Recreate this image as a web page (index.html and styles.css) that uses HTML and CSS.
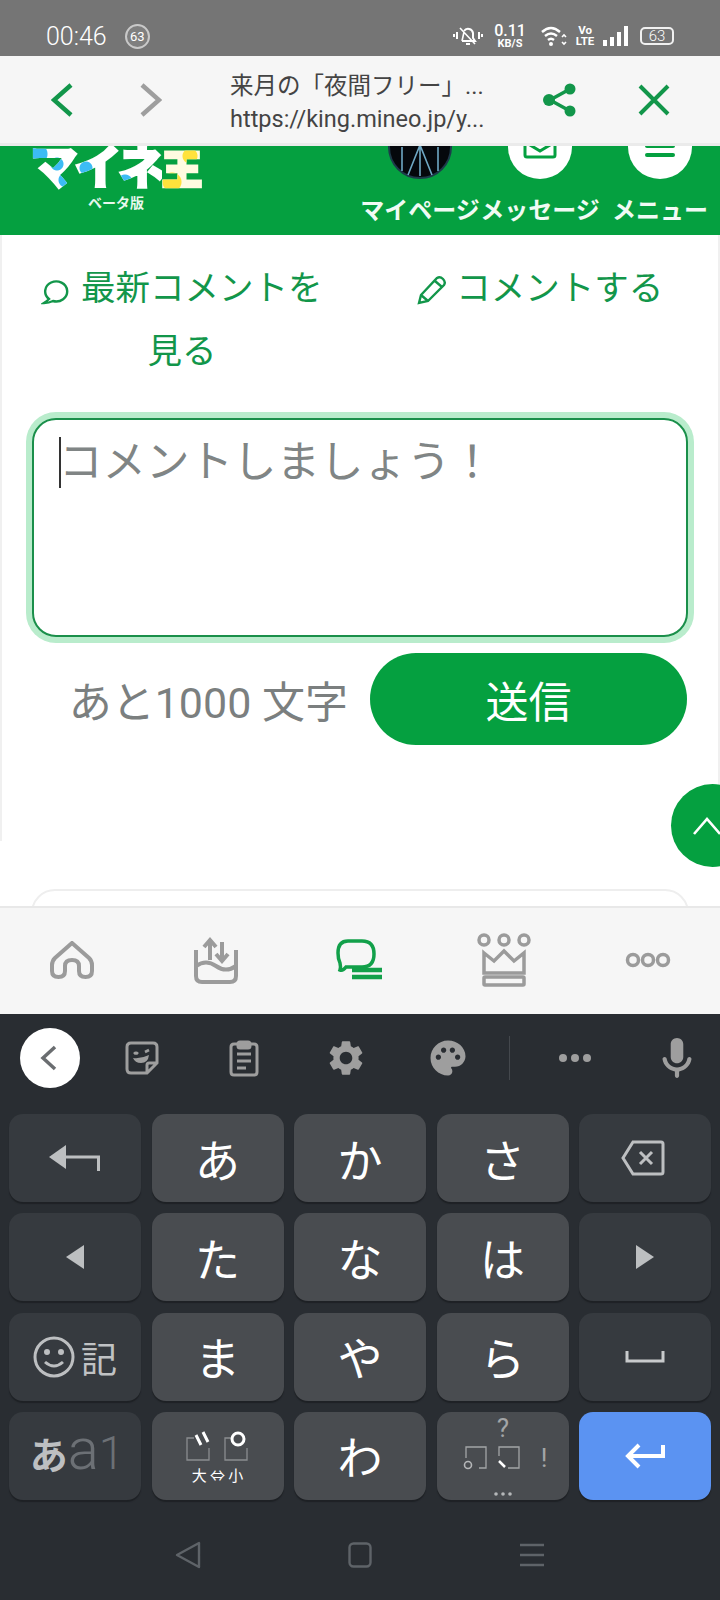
FILE: index.html
```html
<!DOCTYPE html>
<html lang="ja">
<head>
    <meta charset="UTF-8">
    <meta name="viewport" content="width=device-width, initial-scale=1.0">
    <title>マイネ王</title>
    <link rel="stylesheet" href="styles.css">
</head>
<body>
    <div class="status-bar">
        <div class="status-left">
            <span class="clock">00:46</span>
            <span class="badge">63</span>
        </div>
        <div class="status-right">
            <svg class="ic-bell" width="30" height="24" viewBox="0 0 30 24" fill="none" stroke="#fff" stroke-width="2">
                <path d="M9 17h13l-2-3V9a5 5 0 0 0-9 -2"/><path d="M11 8l-2 9M7 4l15 16" stroke-width="1.6"/><path d="M13 20h4"/>
                <path d="M1 10v3M4 8v7M26 8v7M29 10v3"/>
            </svg>
            <div class="speed"><span class="speed-num">0.11</span><span class="speed-unit">KB/S</span></div>
            <svg class="ic-wifi" width="26" height="22" viewBox="0 0 26 22" fill="none" stroke="#fff" stroke-width="2.4">
                <path d="M1 7q9-8 18 0M4 11q6-5 12 0M7 15q3-2.500 6 0"/>
                <circle cx="10" cy="19" r="2" fill="#fff" stroke="none"/>
                <path d="M21 12l2-2 2 2M21 17l2 2 2-2" stroke-width="1.6"/>
            </svg>
            <div class="volte"><span>Vo</span><span>LTE</span></div>
            <svg class="ic-signal" width="26" height="20" viewBox="0 0 26 20" fill="#fff">
                <rect x="0" y="14" width="4" height="6"/><rect x="7" y="11" width="4" height="9"/><rect x="14" y="6" width="4" height="14"/><rect x="21" y="0" width="4" height="20"/>
            </svg>
            <div class="battery"><span>63</span></div>
        </div>
    </div>

    <div class="browser-bar">
        <svg class="nav-arrow" width="22" height="34" viewBox="0 0 22 34" fill="none" stroke="#12964a" stroke-width="4.500"><path d="M20 2L3 17l17 15"/></svg>
        <svg class="nav-arrow nav-forward" width="22" height="34" viewBox="0 0 22 34" fill="none" stroke="#9e9e9e" stroke-width="4.500"><path d="M2 2l17 15L2 32"/></svg>
        <div class="browser-title">
            <div class="page-title">来月の「夜間フリー」<span class="ellipsis">...</span></div>
            <div class="page-url">https://king.mineo.jp/y...</div>
        </div>
        <svg class="share" width="36" height="36" viewBox="0 0 36 36" fill="#12964a" stroke="#12964a">
            <path d="M28 7L8 18l20 11" fill="none" stroke-width="3.500"/>
            <circle cx="28" cy="7" r="5.500" stroke="none"/><circle cx="7" cy="18" r="6" stroke="none"/><circle cx="28" cy="29" r="5.500" stroke="none"/>
        </svg>
        <svg class="close" width="32" height="32" viewBox="0 0 32 32" fill="none" stroke="#12964a" stroke-width="4"><path d="M2 2l28 28M30 2L2 30"/></svg>
    </div>

    <main class="page">
        <header class="site-header">
            <div class="logo">
                <div class="logo-mark"><span class="logo-kana">マイネ</span><span class="logo-king">王</span></div>
                <div class="logo-beta">ベータ版</div>
            </div>
            <div class="header-menu">
                <div class="header-item">
                    <div class="avatar">
                        <svg width="64" height="64" viewBox="0 0 64 64" fill="none" stroke="#6fa8c4" stroke-width="1.600">
                            <circle cx="32" cy="32" r="31" fill="#05080c" stroke="#1d3a4a" stroke-width="2"/>
                            <path d="M32 30L20 60M32 30l12 30M32 30v31M14 32v24M50 32v24"/>
                        </svg>
                    </div>
                    <span>マイページ</span>
                </div>
                <div class="header-item">
                    <div class="avatar avatar-white">
                        <svg width="34" height="50" viewBox="0 0 34 50" fill="none" stroke="#05a040" stroke-width="3"><rect x="2" y="17" width="30" height="25" rx="2"/><path d="M2 27l15 9 15-9"/></svg>
                    </div>
                    <span>メッセージ</span>
                </div>
                <div class="header-item">
                    <div class="avatar avatar-white">
                        <svg width="30" height="50" viewBox="0 0 30 50" fill="#05a040"><rect y="20" width="30" height="4" rx="2"/><rect y="29" width="30" height="4" rx="2"/><rect y="38" width="30" height="4" rx="2"/></svg>
                    </div>
                    <span>メニュー</span>
                </div>
            </div>
        </header>

        <section class="comment-form">
            <div class="comment-links">
                <a class="comment-link comment-link-latest">
                    <svg width="30" height="30" viewBox="0 0 30 30" fill="none" stroke="#12964a" stroke-width="2.400"><path d="M8 24a11 10 0 1 1 4 2q-4 2-9 2 3-2 5-4z"/></svg>
                    最新コメントを見る
                </a>
                <a class="comment-link">
                    <svg width="30" height="30" viewBox="0 0 30 30" fill="none" stroke="#12964a" stroke-width="2.400"><path d="M2 28l2-8L20 3q3-2 6 1t1 6L11 26zM4 20l7 6M18 6l7 6"/></svg>
                    コメントする
                </a>
            </div>
            <div class="comment-box">
                <span class="caret"></span><span class="placeholder">コメントしましょう！</span>
            </div>
            <div class="form-footer">
                <span class="char-count">あと1000 文字</span>
                <button class="send-btn">送信</button>
            </div>
        </section>

        <div class="next-card"></div>

        <div class="to-top">
            <svg width="30" height="20" viewBox="0 0 30 20" fill="none" stroke="#fff" stroke-width="2.600"><path d="M2 18L15 3l13 15"/></svg>
        </div>
    </main>

    <nav class="bottom-nav">
        <svg width="46" height="38" viewBox="0 0 46 38" fill="none" stroke="#9b9b9b" stroke-width="4"><path d="M23 2l17 15q3 3 3 7v6q0 6-6.500 6T30 30v-5q0-6-7-6t-7 6v5q0 6-6.500 6T3 30v-6q0-4 3-7z"/></svg>
        <svg width="46" height="48" viewBox="0 0 46 48" fill="none" stroke="#9b9b9b" stroke-width="4"><path d="M3 14v26q0 6 6 6h28q6 0 6-6V14M3 30q10-7 20 0t20 0M17 24V5M11 11l6-7 6 7M29 6v18M23 18l6 7 6-7"/></svg>
        <svg width="48" height="42" viewBox="0 0 48 42" fill="none" stroke="#12a04a"><path d="M12 2h14q12 0 12 13t-12 13H10q-3 4-6 3 1-3 0-7-2-4-2-10Q2 2 12 2z" stroke-width="3.500"/><path d="M16 31h30M16 38h30" stroke-width="4.500"/></svg>
        <svg width="54" height="54" viewBox="0 0 54 54" fill="none" stroke="#9b9b9b" stroke-width="3.500"><circle cx="7" cy="7" r="5"/><circle cx="27" cy="7" r="5"/><circle cx="47" cy="7" r="5"/><path d="M7 20l10 8 10-10 10 10 10-8v20H7z"/><rect x="7" y="44" width="40" height="8" rx="1"/></svg>
        <svg width="46" height="16" viewBox="0 0 46 16" fill="none" stroke="#9b9b9b" stroke-width="3.500"><circle cx="8" cy="8" r="5.500"/><circle cx="23" cy="8" r="5.500"/><circle cx="38" cy="8" r="5.500"/></svg>
    </nav>

    <div class="keyboard">
        <div class="kb-tools">
            <div class="tool-back">
                <svg width="18" height="26" viewBox="0 0 18 26" fill="none" stroke="#6a6d70" stroke-width="3.500"><path d="M15 2L3 13l12 11"/></svg>
            </div>
            <div class="tool tool-first">
                <svg width="34" height="34" viewBox="0 0 34 34" fill="none" stroke="#9e9e9e" stroke-width="3"><path d="M6 2h22q4 0 4 4v16L22 32H6q-4 0-4-4V6q0-4 4-4zM32 22H24q-2 0-2 2v8"/><path d="M9 13q2-2 4 0M20 11l4-2" stroke-width="2.600"/><path d="M8 17q8 1 16-3-1 8-8 8-6 0-8-5z" fill="#9e9e9e" stroke="none"/></svg>
            </div>
            <div class="tool">
                <svg width="30" height="38" viewBox="0 0 30 38" fill="none" stroke="#9e9e9e" stroke-width="3"><path d="M9 5H5q-3 0-3 3v25q0 3 3 3h20q3 0 3-3V8q0-3-3-3h-4"/><rect x="9" y="3" width="12" height="6" rx="2" fill="#9e9e9e"/><path d="M8 15h14M8 22h14M8 29h9"/></svg>
            </div>
            <div class="tool">
                <svg width="42" height="42" viewBox="0 0 24 24" fill="#9e9e9e"><path d="M19.14 12.94c.04-.3.06-.61.06-.94 0-.32-.02-.64-.07-.94l2.03-1.58c.18-.14.23-.41.12-.61l-1.92-3.32c-.12-.22-.37-.29-.59-.22l-2.39.96c-.5-.38-1.03-.7-1.62-.94l-.36-2.54c-.04-.24-.24-.41-.48-.41h-3.84c-.24 0-.43.17-.47.41l-.36 2.54c-.59.24-1.13.57-1.62.94l-2.39-.96c-.22-.08-.47 0-.59.22L2.74 8.87c-.12.21-.08.47.12.61l2.03 1.58c-.05.3-.09.63-.09.94s.02.64.07.94l-2.03 1.58c-.18.14-.23.41-.12.61l1.92 3.32c.12.22.37.29.59.22l2.39-.96c.5.38 1.03.7 1.62.94l.36 2.54c.05.24.24.41.48.41h3.84c.24 0 .44-.17.47-.41l.36-2.54c.59-.24 1.13-.56 1.62-.94l2.39.96c.22.08.47 0 .59-.22l1.92-3.32c.12-.22.07-.47-.12-.61l-2.01-1.58zM12 15.6c-1.98 0-3.6-1.62-3.6-3.6s1.62-3.6 3.6-3.6 3.6 1.62 3.6 3.6-1.62 3.6-3.6 3.6z"/></svg>
            </div>
            <div class="tool">
                <svg width="42" height="42" viewBox="0 0 24 24" fill="#9e9e9e"><path d="M12 2C6.490 2 2 6.490 2 12s4.490 10 10 10c1.380 0 2.500-1.120 2.500-2.500 0-.61-.23-1.200-.64-1.670-.08-.1-.13-.21-.13-.33 0-.28.22-.5.5-.5H16c3.310 0 6-2.690 6-6 0-4.960-4.490-9-10-9zm5.500 11c-.83 0-1.500-.67-1.500-1.500s.67-1.500 1.500-1.500 1.500.67 1.500 1.500-.67 1.500-1.500 1.500zm-3-4c-.83 0-1.500-.67-1.500-1.500S13.670 6 14.500 6s1.500.67 1.500 1.500S15.330 9 14.500 9zM5 11.500c0-.83.67-1.500 1.500-1.500s1.500.67 1.500 1.500S7.330 13 6.500 13 5 12.330 5 11.500zm6-4c0 .83-.67 1.500-1.500 1.500S8 8.330 8 7.500 8.670 6 9.500 6s1.500.67 1.500 1.500z"/></svg>
            </div>
            <div class="tool-divider"></div>
            <div class="tool tool-dots">
                <svg width="34" height="10" viewBox="0 0 34 10" fill="#9e9e9e"><circle cx="5" cy="5" r="4"/><circle cx="17" cy="5" r="4"/><circle cx="29" cy="5" r="4"/></svg>
            </div>
            <div class="tool tool-mic">
                <svg width="44" height="44" viewBox="3 1 18 21" fill="#9e9e9e"><path d="M12 14c1.660 0 3-1.340 3-3V5c0-1.660-1.340-3-3-3S9 3.340 9 5v6c0 1.660 1.340 3 3 3zm5.910-3c-.49 0-.9.36-.98.85C16.520 14.200 14.470 16 12 16s-4.520-1.800-4.930-4.150c-.08-.49-.49-.85-.98-.85-.61 0-1.090.54-1 1.140.49 3 2.890 5.350 5.910 5.780V20c0 .55.45 1 1 1s1-.45 1-1v-2.080c3.020-.43 5.420-2.780 5.910-5.780.1-.6-.39-1.140-1-1.140z"/></svg>
            </div>
        </div>

        <div class="kb-keys">
            <div class="key key-side">
                <svg width="52" height="26" viewBox="0 0 52 26" fill="#bdbfc1"><path d="M0 12L17 0v24z"/><path d="M14 10.500h37V26h-3v-12.500H14z"/></svg>
            </div>
            <div class="key">あ</div>
            <div class="key">か</div>
            <div class="key">さ</div>
            <div class="key key-side key-delete">
                <svg width="44" height="36" viewBox="0 0 44 36" fill="none" stroke="#bdbfc1" stroke-width="3"><path d="M12 2h28q2 0 2 2v28q0 2-2 2H12L2 18zM19 12l12 12M31 12L19 24"/></svg>
            </div>

            <div class="key key-side">
                <svg width="18" height="24" viewBox="0 0 18 24" fill="#bdbfc1"><path d="M0 12L18 0v24z"/></svg>
            </div>
            <div class="key">た</div>
            <div class="key">な</div>
            <div class="key">は</div>
            <div class="key key-side">
                <svg width="18" height="24" viewBox="0 0 18 24" fill="#bdbfc1"><path d="M18 12L0 0v24z"/></svg>
            </div>

            <div class="key key-side key-emoji">
                <svg width="42" height="42" viewBox="0 0 42 42" fill="none" stroke="#bdbfc1" stroke-width="3"><circle cx="21" cy="21" r="19"/><circle cx="14" cy="16" r="1.500" fill="#bdbfc1"/><circle cx="28" cy="16" r="1.500" fill="#bdbfc1"/><path d="M12 26q9 8 18 0"/></svg>
                <span>記</span>
            </div>
            <div class="key">ま</div>
            <div class="key">や</div>
            <div class="key">ら</div>
            <div class="key key-side">
                <svg width="40" height="12" viewBox="0 0 40 12" fill="none" stroke="#c8cacc" stroke-width="3"><path d="M2 0v10h36V0"/></svg>
            </div>

            <div class="key key-side key-mode"><span class="mode-kana">あ</span><span class="mode-a">a</span><span class="mode-one">1</span></div>
            <div class="key key-dakuten">
                <svg width="64" height="30" viewBox="0 0 64 30" fill="none">
                    <path d="M8 7H1v22h22v-12M45 7h-6v22h22V17" stroke="#8a8d90" stroke-width="1.300"/>
                    <path d="M10 4l5 10M17 1l5 10" stroke="#fff" stroke-width="3"/>
                    <circle cx="52" cy="8" r="6" stroke="#fff" stroke-width="3"/>
                </svg>
                <span class="dakuten-label">大 ⇔ 小</span>
            </div>
            <div class="key">わ</div>
            <div class="key key-punct">
                <svg width="100" height="84" viewBox="0 0 100 84" fill="none">
                    <text class="punct-mark" x="50" y="23" text-anchor="middle">?</text>
                    <path d="M13 44V33h20v21h-7M46 42V33h20v21h-11" stroke="#a3a5a7" stroke-width="1.300"/>
                    <circle cx="15" cy="51" r="3.500" stroke="#b5b7b9" stroke-width="1.600"/>
                    <path d="M46 47l6 6" stroke="#fff" stroke-width="2.500"/>
                    <text class="punct-mark" x="91" y="53" text-anchor="middle">!</text>
                    <circle cx="43" cy="80" r="1.800" fill="#b5b7b9"/><circle cx="50" cy="80" r="1.800" fill="#b5b7b9"/><circle cx="57" cy="80" r="1.800" fill="#b5b7b9"/>
                </svg>
            </div>
            <div class="key key-enter">
                <svg width="40" height="26" viewBox="0 0 40 26" fill="none" stroke="#fff" stroke-width="4"><path d="M38 2v11H4M14 2L3 13l11 11"/></svg>
            </div>
        </div>

        <div class="sys-nav">
            <svg width="26" height="28" viewBox="0 0 26 28" fill="none" stroke="#5e6368" stroke-width="2.400"><path d="M24 2v24L2 14z" stroke-linejoin="round"/></svg>
            <svg width="24" height="26" viewBox="0 0 24 26" fill="none" stroke="#5e6368" stroke-width="2.400"><rect x="1.500" y="1.500" width="21" height="23" rx="4"/></svg>
            <svg width="24" height="24" viewBox="0 0 24 24" fill="none" stroke="#5e6368" stroke-width="2.400"><path d="M0 2h24M0 12h24M0 22h24"/></svg>
        </div>
    </div>
</body>
</html>
```

FILE: styles.css
```css
* {
    box-sizing: border-box;
}
body {
    font-family: "Noto Sans CJK JP", "Noto Sans", sans-serif;
    margin: 0;
    padding: 0;
    width: 720px;
    height: 1600px;
    overflow: hidden;
    display: flex;
    flex-direction: column;
    background-color: #fff;
}

/* Barra de estado */
.status-bar {
    height: 56px;
    flex: none;
    background-color: #757575;
    color: #fff;
    display: flex;
    align-items: center;
    justify-content: space-between;
    padding: 16px 46px 0 46px;
    font-family: Roboto, sans-serif;
}
.status-left {
    display: flex;
    align-items: center;
    gap: 18px;
}
.clock {
    font-size: 25px;
    font-weight: 300;
}
.badge {
    width: 25px;
    height: 25px;
    border-radius: 50%;
    border: 2px solid #c9c9c9;
    background-color: #7f7f7f;
    font-size: 13px;
    display: flex;
    align-items: center;
    justify-content: center;
}
.status-right {
    display: flex;
    align-items: center;
}
.ic-bell {
    margin-right: 11px;
}
.speed {
    display: flex;
    flex-direction: column;
    align-items: center;
    width: 32px;
    margin-right: 15px;
    font-weight: 500;
}
.speed-num {
    font-size: 16px;
    line-height: 14px;
}
.speed-unit {
    font-size: 11px;
    font-weight: 700;
    line-height: 11px;
}
.ic-wifi {
    margin-right: 10px;
}
.volte {
    display: flex;
    flex-direction: column;
    width: 16px;
    margin-right: 10px;
    font-size: 11.500px;
    font-weight: 700;
    line-height: 11px;
    align-items: center;
}
.ic-signal {
    margin-right: 11px;
}
.battery {
    width: 34px;
    height: 18px;
    border: 2px solid #f0f0f0;
    border-radius: 5px;
    font-size: 15px;
    font-weight: 300;
    display: flex;
    align-items: center;
    justify-content: center;
}

/* Barra del navegador */
.browser-bar {
    height: 90px;
    flex: none;
    background-color: #f6f6f6;
    border-bottom: 3px solid #ebebeb;
    display: flex;
    align-items: center;
}
.nav-arrow {
    margin-left: 51px;
}
.nav-forward {
    margin-left: 67px;
}
.browser-title {
    width: 262px;
    margin-left: 68px;
    color: #444;
    white-space: nowrap;
}
.page-title {
    font-size: 23.500px;
    line-height: 36px;
}
.ellipsis {
    font-family: Roboto, sans-serif;
}
.page-url {
    font-family: Roboto, sans-serif;
    font-size: 23.500px;
    line-height: 30px;
}
.share {
    margin-left: 50px;
}
.close {
    margin-left: 60px;
}

/* Cabecera del sitio */
.page {
    height: 760px;
    flex: none;
    position: relative;
    overflow: hidden;
    background-color: #fff;
}
.site-header {
    height: 89px;
    background-color: #05a040;
    display: flex;
    overflow: hidden;
}
.logo {
    width: 166px;
    margin-left: 33px;
    display: flex;
    flex-direction: column;
    align-items: center;
    margin-top: -8px;
}
.logo-mark {
    display: flex;
    font-size: 48px;
    font-weight: 900;
    line-height: 50px;
    white-space: nowrap;
}
.logo-kana {
    letter-spacing: -4px;
    -webkit-text-stroke: 2px transparent;
    background-image:
        radial-gradient(circle at 7px 16px, #3cbcf5 10px, transparent 11px),
        radial-gradient(circle at 27px 26px, #3cbcf5 6px, transparent 7px),
        radial-gradient(circle at 36px 42px, #3cbcf5 7px, transparent 8px),
        radial-gradient(circle at 56px 30px, #3cbcf5 6px, transparent 7px),
        radial-gradient(circle at 95px 44px, #3cbcf5 7px, transparent 8px),
        linear-gradient(#fff, #fff);
    -webkit-background-clip: text;
    background-clip: text;
    color: transparent;
}
.logo-king {
    font-size: 40px;
    margin-top: 4px;
    -webkit-text-stroke: 3px transparent;
    background-image:
        radial-gradient(circle at 10px 40px, #ffe23c 9px, transparent 10px),
        radial-gradient(circle at 28px 14px, #ffe23c 7px, transparent 8px),
        linear-gradient(#fffbe0, #fffbe0);
    -webkit-background-clip: text;
    background-clip: text;
    color: transparent;
}
.logo-beta {
    color: #e8f8ee;
    font-size: 14px;
    font-weight: 700;
    line-height: 20px;
}
.header-menu {
    margin-left: auto;
    display: flex;
}
.header-item {
    width: 120px;
    display: flex;
    flex-direction: column;
    align-items: center;
    color: #f0fbf4;
    font-size: 24px;
    font-weight: 700;
    line-height: 30px;
    white-space: nowrap;
}
.header-item span {
    margin-top: 15px;
}
.avatar {
    width: 64px;
    height: 64px;
    margin-top: -31px;
    flex: none;
}
.avatar svg {
    display: block;
}
.avatar-white {
    background-color: #fff;
    border-radius: 50%;
    display: flex;
    justify-content: center;
}

/* Formulario de comentario */
.comment-form {
    height: 606px;
    padding: 19px 32px 0;
    border-left: 2px solid #f0f0f0;
    border-right: 2px solid #f0f0f0;
}
.comment-links {
    display: grid;
    grid-template-columns: 1fr 1fr;
    margin: 0 -34px;
}
.comment-link {
    color: #12964a;
    font-size: 34.500px;
    line-height: 63px;
    text-align: center;
    padding: 0 34px;
}
.comment-link-latest {
    padding-left: 38px;
}
.comment-link svg {
    vertical-align: -5px;
    margin-right: 2px;
}
.comment-box {
    height: 219px;
    margin-top: 38px;
    margin-left: -2px;
    margin-right: -2px;
    border: 2px solid #1a8f4a;
    border-radius: 24px;
    box-shadow: 0 0 0 6px #b9eccc;
    padding: 17px 0 0 25px;
    display: flex;
    align-items: flex-start;
    background-color: #fff;
}
.caret {
    width: 2px;
    height: 51px;
    flex: none;
    background-color: #333;
}
.placeholder {
    color: #808585;
    font-size: 43.500px;
    line-height: 40px;
    margin-left: -2px;
    margin-top: 2px;
    white-space: nowrap;
}
.form-footer {
    display: flex;
    align-items: center;
    justify-content: flex-end;
    margin-top: 16px;
    gap: 22px;
    margin-right: -1px;
}
.char-count {
    color: #7b7f7f;
    font-family: Roboto, "Noto Sans CJK JP", sans-serif;
    font-size: 43px;
}
.send-btn {
    width: 317px;
    height: 92px;
    border: none;
    border-radius: 46px;
    background-color: #05a040;
    color: #fff;
    font-family: inherit;
    font-size: 43px;
}
.next-card {
    height: 60px;
    margin: 48px 31px 0;
    border: 2px solid #eee;
    border-radius: 24px;
}
.to-top {
    position: absolute;
    left: 671px;
    top: 638px;
    width: 83px;
    height: 83px;
    border-radius: 50%;
    background-color: #05a040;
    padding: 32px 0 0 21px;
}
.to-top svg {
    display: block;
}

/* Navegación inferior */
.bottom-nav {
    height: 108px;
    flex: none;
    background-color: #f6f6f6;
    border-top: 2px solid #e8e8e8;
    display: grid;
    grid-template-columns: repeat(5, 144px);
    justify-items: center;
    align-items: center;
    padding-bottom: 3px;
}

/* Teclado */
.keyboard {
    flex: 1;
    background-color: #292d32;
    display: flex;
    flex-direction: column;
}
.kb-tools {
    height: 100px;
    flex: none;
    display: flex;
    align-items: center;
    padding: 0 0 12px 20px;
}
.tool-back {
    width: 60px;
    height: 60px;
    border-radius: 50%;
    background-color: #fff;
    display: flex;
    align-items: center;
    justify-content: center;
    padding-right: 3px;
}
.tool {
    width: 102px;
    display: flex;
    justify-content: center;
}
.tool-first {
    margin-left: 11px;
}
.tool-divider {
    width: 1px;
    height: 44px;
    margin-left: 10px;
    background-color: #44484d;
}
.tool-dots {
    width: 130px;
}
.tool-mic {
    width: 74px;
}
.kb-keys {
    display: grid;
    grid-template-columns: repeat(5, 132px);
    grid-auto-rows: 88px;
    column-gap: 10.500px;
    row-gap: 11.300px;
    padding: 0 9px;
}
.key {
    background-color: #494c50;
    border-radius: 14px;
    box-shadow: 0 2px 1px #1e2125;
    color: #fff;
    font-size: 45px;
    display: flex;
    align-items: center;
    justify-content: center;
}
.key-side {
    background-color: #363a3f;
}
.key-delete {
    padding-right: 4px;
}
.key-emoji {
    gap: 6px;
    color: #c0c2c4;
    font-size: 36px;
}
.key-mode {
    font-family: Roboto, sans-serif;
    line-height: 1;
    align-items: baseline;
    padding: 8px 0 0 4px;
}
.mode-kana {
    font-family: "Noto Sans CJK JP", sans-serif;
    font-size: 38px;
    font-weight: 700;
    color: #bdbfc1;
}
.mode-a {
    font-size: 58px;
    font-weight: 300;
    color: #6c7075;
}
.mode-one {
    font-size: 46px;
    font-weight: 300;
    color: #6c7075;
}
.key-dakuten {
    flex-direction: column;
    gap: 4px;
    padding-top: 5px;
}
.dakuten-label {
    font-size: 15px;
    line-height: 20px;
    font-family: "Noto Sans CJK JP", "DejaVu Sans", sans-serif;
}
.punct-mark {
    font-family: Roboto, sans-serif;
    font-size: 26px;
    fill: #a3a5a7;
}
.key-enter {
    background-color: #5b93f2;
}

/* Botones del sistema */
.sys-nav {
    flex: 1;
    display: grid;
    grid-template-columns: repeat(3, 172px);
    justify-content: center;
    justify-items: center;
    align-items: center;
    padding-top: 10px;
}
```
